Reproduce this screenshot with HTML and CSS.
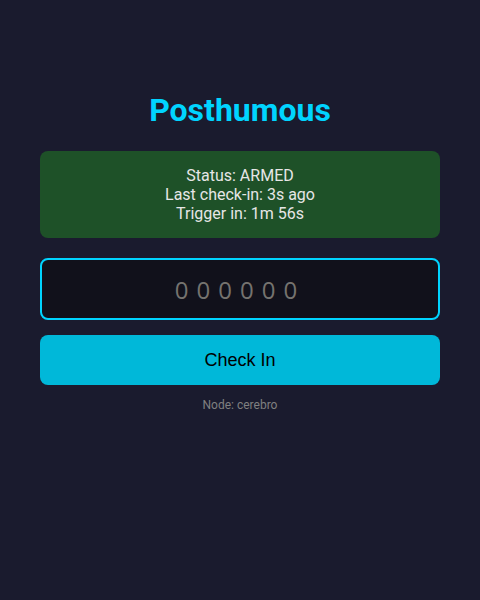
FILE: index.html
```html
<!DOCTYPE html>
<html>
<head>
<meta charset="utf-8">
<link rel="stylesheet" href="styles.css">
</head>
<body>
<main class="container">
  <h1 class="title">Posthumous</h1>
  <div class="status">
    <div>Status: ARMED</div>
    <div>Last check-in: 3s ago</div>
    <div>Trigger in: 1m 56s</div>
  </div>
  <input class="code" type="text" placeholder="000000">
  <button class="checkin">Check In</button>
  <div class="node">Node: cerebro</div>
</main>
</body>
</html>
```
FILE: styles.css
```css
html, body {
  margin: 0;
  padding: 0;
  background: #1a1b2e;
  height: 100%;
}
body {
  font-family: Roboto, "Liberation Sans", sans-serif;
  color: #e0e0e0;
}
.container {
  width: 400px;
  margin: 0 auto;
  padding-top: 70px;
  display: flex;
  flex-direction: column;
}
.title {
  margin: 19px 0 20px;
  text-align: center;
  color: #00d4ff;
  font-size: 32px;
  font-weight: 700;
  line-height: 42px;
}
.status {
  background: #1e5128;
  border-radius: 8px;
  padding: 15px 16px;
  text-align: center;
  font-size: 16px;
  line-height: 19px;
  color: #e6e6e6;
}
.code {
  margin-top: 20px;
  box-sizing: border-box;
  height: 62px;
  width: 100%;
  background: #11111b;
  border: 2px solid #00d4ff;
  border-radius: 8px;
  color: #ddd;
  font-family: "Open Sans", sans-serif;
  font-size: 24px;
  letter-spacing: 8px;
  text-align: center;
  outline: none;
  padding: 0;
}
.code::placeholder {
  color: #75736f;
}
.checkin {
  margin-top: 15px;
  height: 50px;
  border: none;
  border-radius: 8px;
  background: #00b8d9;
  color: #000;
  font-family: "Liberation Sans", Arial, sans-serif;
  font-size: 18px;
}
.node {
  margin-top: 13px;
  text-align: center;
  font-size: 12px;
  color: #808080;
}
```
